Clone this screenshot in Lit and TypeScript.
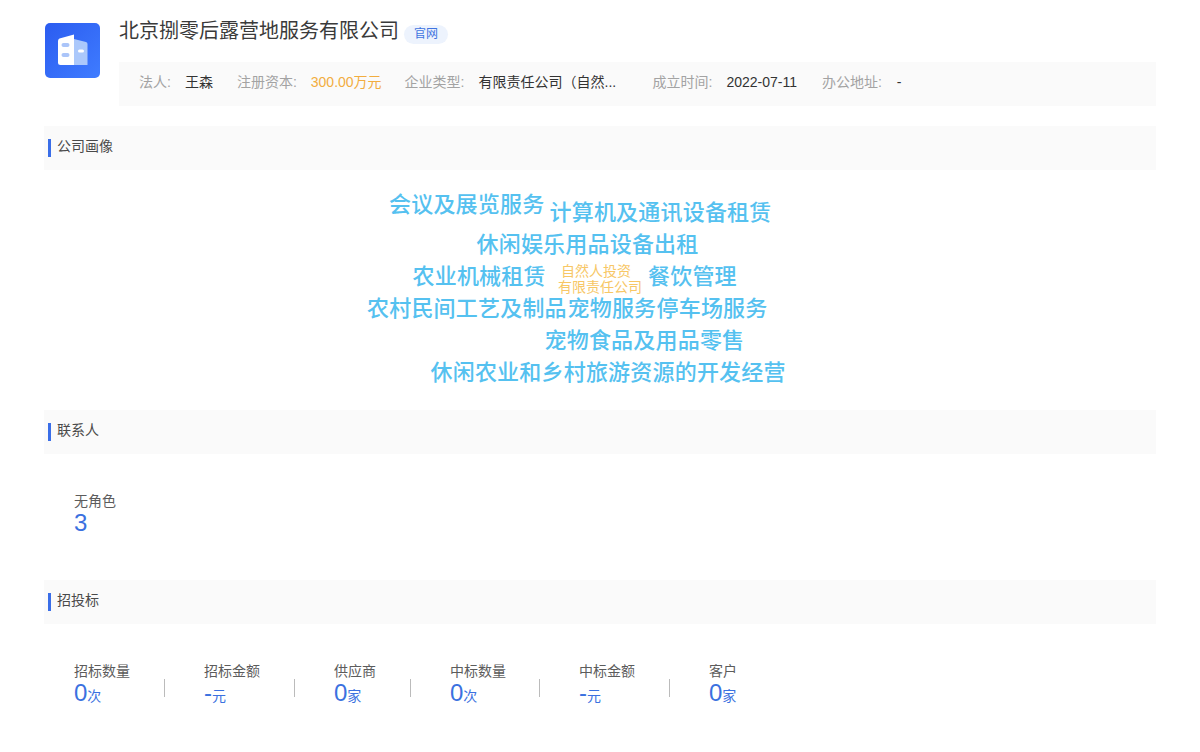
import { LitElement, html, css, svg } from "lit";
import { customElement } from "lit/decorators.js";

const cloud: [string, number, number][] = [
  ["会议及展览服务", 389, 204],
  ["计算机及通讯设备租赁", 549.5, 212],
  ["休闲娱乐用品设备出租", 476.5, 244],
  ["农业机械租赁", 412.5, 276],
  ["餐饮管理", 648, 276],
  ["农村民间工艺及制品", 367, 308],
  ["宠物服务", 567.5, 308],
  ["停车场服务", 656.5, 308],
  ["宠物食品及用品零售", 544.5, 340],
  ["休闲农业和乡村旅游资源的开发经营", 430.5, 372],
];
const stats = [
  ["招标数量", "0", "次"],
  ["招标金额", "-", "元"],
  ["供应商", "0", "家"],
  ["中标数量", "0", "次"],
  ["中标金额", "-", "元"],
  ["客户", "0", "家"],
];

@customElement("app-root")
export class AppRoot extends LitElement {
  static styles = css`
    :host {
      display: block;
      width: 1200px;
      height: 752px;
      overflow: hidden;
      background: #fff;
      font-family: "Liberation Sans", "Noto Sans CJK SC", sans-serif;
      color: #333;
      box-sizing: border-box;
      padding: 0 44px;
    }
    .head { display: flex; height: 126px; }
    .logo { width: 55px; height: 55px; margin: 23px 20px 0 1px; flex: none; display: block; }
    .main { flex: 1; min-width: 0; margin-left: -1px; }
    .title-row { display: flex; align-items: flex-start; height: 62px; padding-top: 19px; box-sizing: border-box; }
    .title { font-size: 20px; line-height: 24px; color: #3a3a3a; }
    .tag {
      font-size: 12px; line-height: 19px; height: 19px; width: 44px; text-align: center;
      margin: 6px 0 0 5px; border-radius: 10px; background: #edf3fd; color: #3f74e0;
    }
    .info {
      display: flex; height: 44px; align-items: flex-start; background: #fafafa;
      padding-left: 20px; font-size: 14px; line-height: 40px;
    }
    .info .k { color: #a3a3a3; margin-right: 14px; white-space: nowrap; }
    .info .v { color: #333; margin-right: 24px; white-space: nowrap; }
    .info .money { color: #f2ad3f; margin-right: 23px; }
    .info .clip { width: 141px; margin-right: 33px; }
    .info .date { margin-right: 25px; }
    .info .k.last { margin-right: 15px; }
    .sec { height: 44px; background: #fafafa; padding: 13px 0 0 4px; box-sizing: border-box; display: flex; align-items: flex-start; }
    .sec i { width: 3px; height: 18px; background: #3a6ee8; margin-right: 6px; flex: none; }
    .sec span { font-size: 14px; line-height: 14px; color: #4a4a4a; }
    .cloud { position: relative; height: 240px; }
    .cloud span {
      position: absolute; white-space: nowrap; font-size: 22px; line-height: 30px; letter-spacing: 0.2px;
      color: #55c1f0; transform: translateY(-15px); margin-left: -44px; margin-top: -169px; font-weight: 500;
    }
    .cloud .small {
      font-size: 14px; line-height: 16px; letter-spacing: 0; color: #f7c766;
      transform: translateY(-8px); font-weight: 400; margin-top: -170px;
    }
    .contact { height: 126px; padding: 40px 0 0 30px; box-sizing: border-box; }
    .label { font-size: 14px; line-height: 14px; color: #5c5c5c; white-space: nowrap; }
    .num { font-size: 24px; line-height: 28px; color: #3b71e0; white-space: nowrap; margin-top: 1px; }
    .num small { font-size: 14px; }
    .stats { display: flex; padding: 40px 0 0 30px; align-items: flex-start; }
    .div { width: 1px; height: 18px; background: #bbb; margin: 15px 39px 0 34px; flex: none; }
    .div.tight { margin-left: 33px; }
  `;

  render() {
    return html`
      <div class="head">
        <svg class="logo" viewBox="0 0 55 55">
          <defs>
            <linearGradient id="g" x1="0" y1="0" x2="1" y2="1">
              <stop offset="0" stop-color="#2b5cf0" />
              <stop offset="1" stop-color="#3f7cff" />
            </linearGradient>
          </defs>
          <rect width="55" height="55" rx="5" fill="url(#g)" />
          ${svg`<path d="M29 16 L41 19 Q42.500 19.500 42.500 21 V42 H29 Z" fill="#abc8fb" />
          <path d="M14.500 15.500 L29 11.500 V42 H15.500 Q13 42 13 39.500 V18 Q13 16 14.500 15.500 Z" fill="#fff" />
          <rect x="16.500" y="20" width="8" height="4" rx="2" fill="#abc5f9" />
          <rect x="16.500" y="30" width="8" height="4" rx="2" fill="#abc5f9" />
          <rect x="33" y="26.500" width="6" height="3" rx="1.500" fill="#fff" />`}
        </svg>
        <div class="main">
          <div class="title-row">
            <div class="title">北京捌零后露营地服务有限公司</div>
            <div class="tag">官网</div>
          </div>
          <div class="info">
            <span class="k">法人:</span><span class="v">王森</span>
            <span class="k">注册资本:</span><span class="v money">300.00万元</span>
            <span class="k">企业类型:</span><span class="v clip">有限责任公司（自然...</span>
            <span class="k">成立时间:</span><span class="v date">2022-07-11</span>
            <span class="k last">办公地址:</span><span class="v">-</span>
          </div>
        </div>
      </div>
      <div class="sec"><i></i><span>公司画像</span></div>
      <div class="cloud">
        ${cloud.map(([t, x, y]) => html`<span style="left:${x}px;top:${y}px">${t}</span>`)}
        <span class="small" style="left:561px;top:271px">自然人投资</span>
        <span class="small" style="left:558px;top:287px">有限责任公司</span>
      </div>
      <div class="sec"><i></i><span>联系人</span></div>
      <div class="contact">
        <div class="label">无角色</div>
        <div class="num">3</div>
      </div>
      <div class="sec"><i></i><span>招投标</span></div>
      <div class="stats">
        ${stats.map(
          ([l, n, u], i) => html`
            ${i ? html`<div class="div ${i === 4 ? "tight" : ""}"></div>` : ""}
            <div>
              <div class="label">${l}</div>
              <div class="num">${n}<small>${u}</small></div>
            </div>
          `
        )}
      </div>
    `;
  }
}
